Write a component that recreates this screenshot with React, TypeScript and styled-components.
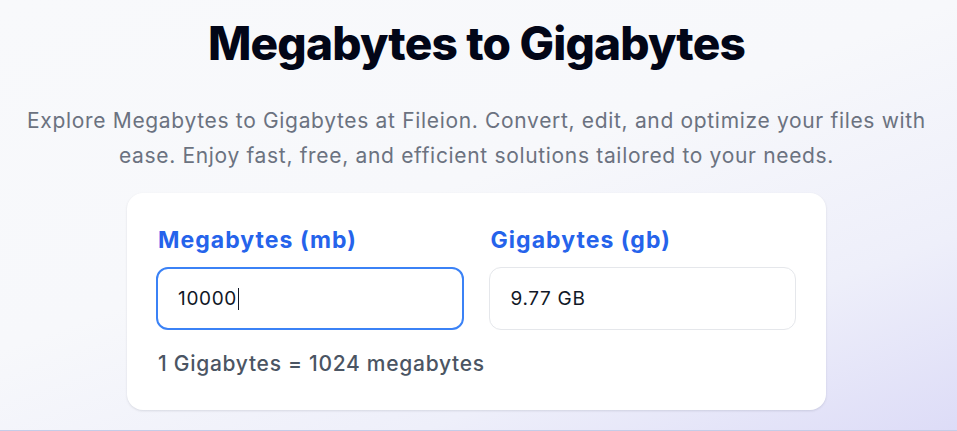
import { useState } from 'react'
import styled, { createGlobalStyle } from 'styled-components'

const GlobalStyle = createGlobalStyle`
  * { box-sizing: border-box; }
  html, body { margin: 0; padding: 0; }
  body {
    font-family: Inter, "Noto Sans", sans-serif;
    -webkit-font-smoothing: antialiased;
  }
`

function toGigabytes(mb: string) {
  const value = parseFloat(mb)
  if (Number.isNaN(value)) return ''
  return `${(value / 1024).toFixed(2)} GB`
}

export default function App() {
  const [megabytes, setMegabytes] = useState('10000')

  return (
    <>
      <GlobalStyle />
      <Section>
        <Title>Megabytes to Gigabytes</Title>
        <Lead>
          Explore Megabytes to Gigabytes at Fileion. Convert, edit, and optimize your files with
          ease. Enjoy fast, free, and efficient solutions tailored to your needs.
        </Lead>
        <Card>
          <Fields>
            <Field>
              <Label htmlFor="mb">Megabytes (mb)</Label>
              <InputShell $active>
                <BareInput
                  id="mb"
                  autoFocus
                  value={megabytes}
                  onChange={(e) => setMegabytes(e.target.value)}
                />
                <Caret />
              </InputShell>
            </Field>
            <Field>
              <Label htmlFor="gb">Gigabytes (gb)</Label>
              <InputShell>
                <BareInput id="gb" readOnly tabIndex={-1} value={toGigabytes(megabytes)} />
              </InputShell>
            </Field>
          </Fields>
          <Note>1 Gigabytes = 1024 megabytes</Note>
        </Card>
      </Section>
    </>
  )
}

const Section = styled.section`
  height: 431px;
  padding: 15px 20px 0 16px;
  display: flex;
  flex-direction: column;
  align-items: center;
  background: linear-gradient(160deg, #f8f9fb 0%, #f7f8fb 45%, #eeeffa 75%, #dddcf7 100%);
  border-bottom: 1px solid #c5cce8;
`

const Title = styled.h1`
  margin: 0;
  font-size: 46px;
  line-height: 56px;
  font-weight: 800;
  letter-spacing: -0.018em;
  color: #020617;
  text-align: center;
`

const Lead = styled.p`
  margin: 32px 0 0;
  max-width: 920px;
  font-size: 21px;
  line-height: 35px;
  letter-spacing: 0.032em;
  color: #6b7280;
  text-align: center;
`

const Card = styled.div`
  margin-top: 20px;
  width: 699px;
  padding: 33px 30px 32px 29px;
  background: #ffffff;
  border-radius: 16px;
  box-shadow: 0 1px 3px rgba(15, 23, 42, 0.08), 0 1px 2px rgba(15, 23, 42, 0.04);
`

const Fields = styled.div`
  display: grid;
  grid-template-columns: 1fr 1fr;
  gap: 25px;
`

const Field = styled.div`
  display: flex;
  flex-direction: column;
  gap: 13px;
`

const Label = styled.label`
  padding-left: 2px;
  font-size: 23px;
  line-height: 28px;
  font-weight: 700;
  letter-spacing: 0.045em;
  color: #2563eb;
`

const InputShell = styled.div<{ $active?: boolean }>`
  display: flex;
  align-items: center;
  height: 63px;
  padding: 0 ${({ $active }) => ($active ? '20px' : '21px')};
  background: #ffffff;
  border: ${({ $active }) => ($active ? '2px solid #3b82f6' : '1px solid #e5e7eb')};
  border-radius: 12px;
`

const BareInput = styled.input`
  field-sizing: content;
  min-width: 0;
  padding: 0;
  border: none;
  outline: none;
  background: transparent;
  font-family: Inter, "Noto Sans", sans-serif;
  font-size: 19px;
  letter-spacing: 0.035em;
  color: #111827;
  caret-color: transparent;
`

const Caret = styled.span`
  width: 1px;
  height: 22px;
  margin-left: 1px;
  background: #111827;
`

const Note = styled.p`
  margin: 20px 0 0;
  padding-left: 2px;
  font-size: 21px;
  line-height: 28px;
  font-weight: 500;
  letter-spacing: 0.034em;
  color: #4b5563;
`
